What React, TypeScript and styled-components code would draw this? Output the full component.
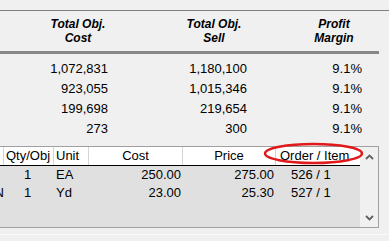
import React from "react";
import styled, { createGlobalStyle } from "styled-components";

const GlobalStyle = createGlobalStyle`
    html, body {
        margin: 0;
        padding: 0;
        background: #f0f0f0;
    }
`;

const Page = styled.div`
    position: relative;
    width: 389px;
    height: 241px;
    overflow: hidden;
    background: #f0f0f0;
    padding-top: 10px;
    box-sizing: border-box;
    font-family: "Liberation Sans", Arial, sans-serif;
    color: #000;
`;

const TopRule = styled.div`
    height: 1px;
    background: #7f7f7f;
`;

const SUMMARY_COLS = "48px 60px 73px 66px 59px 56px";

const SummaryHead = styled.div`
    display: grid;
    grid-template-columns: ${SUMMARY_COLS};
    height: 40px;
    align-items: center;
`;

const HeadLabel = styled.div<{ $col: number }>`
    grid-column: ${({ $col }) => $col};
    font-size: 12px;
    font-weight: bold;
    font-style: italic;
    line-height: 14.5px;
    text-align: center;
    white-space: nowrap;
`;

const ThickBar = styled.div`
    width: 379px;
    height: 3px;
    background: #878787;
`;

const SummaryBody = styled.div`
    margin-top: 5px;
`;

const SummaryRow = styled.div`
    display: grid;
    grid-template-columns: ${SUMMARY_COLS};
    height: 20px;
    align-items: center;
    font-size: 13px;
    line-height: 20px;
`;

const Value = styled.div<{ $col: number }>`
    grid-column: ${({ $col }) => $col};
    text-align: right;
    white-space: nowrap;
`;

const ListFrame = styled.div`
    margin-top: 7px;
    width: 379px;
    display: flex;
    border-top: 1px solid #a0a0a0;
    border-right: 1px solid #a0a0a0;
    border-bottom: 1px solid #a0a0a0;
    box-sizing: border-box;
`;

const ListArea = styled.div`
    width: 360px;
    display: flex;
    flex-direction: column;
`;

const HeaderRow = styled.div`
    display: flex;
    height: 18px;
    background: #fff;
    border-bottom: 1px solid #000;
    font-size: 13px;
    line-height: 18px;
`;

const Body = styled.div`
    height: 61px;
    background: #e0e0e0;
    font-size: 13px;
    line-height: 18px;
`;

const BodyRow = styled.div`
    display: flex;
    height: 18px;
`;

type Align = "left" | "center" | "right";

const Cell = styled.div<{ $w: number; $align?: Align; $pl?: number; $pr?: number; $sep?: boolean }>`
    flex: 0 0 ${({ $w }) => $w}px;
    box-sizing: border-box;
    display: flex;
    justify-content: ${({ $align }) =>
        $align === "right" ? "flex-end" : $align === "center" ? "center" : "flex-start"};
    padding-left: ${({ $pl }) => $pl ?? 0}px;
    padding-right: ${({ $pr }) => $pr ?? 0}px;
    border-right: ${({ $sep }) => ($sep ? "1px solid #d5d5d5" : "none")};
    overflow: hidden;
    white-space: nowrap;
`;

const Scrollbar = styled.div`
    width: 18px;
    background: #f0f0f0;
    display: flex;
    flex-direction: column;
    justify-content: space-between;
    align-items: center;
    padding: 7px 0 6px;
    box-sizing: border-box;
`;

const Below = styled.div`
    margin-top: 6px;
    height: 1px;
    background: #fafafa;
`;

const Annotation = styled.svg`
    position: absolute;
    left: 263px;
    top: 142px;
    pointer-events: none;
`;

const Chevron: React.FC<{ up?: boolean }> = ({ up }) => (
    <svg width="9" height="6" viewBox="0 0 9 6">
        <path
            d={up ? "M1 5 L4.5 1.5 L8 5" : "M1 1 L4.5 4.5 L8 1"}
            fill="none"
            stroke="#606060"
            strokeWidth="1.8"
        />
    </svg>
);

const summary = [
    ["1,072,831", "1,180,100", "9.1%"],
    ["923,055", "1,015,346", "9.1%"],
    ["199,698", "219,654", "9.1%"],
    ["273", "300", "9.1%"],
];

const items = [
    { lead: "", qty: "1", unit: "EA", cost: "250.00", price: "275.00", order: "526 / 1" },
    { lead: "N", qty: "1", unit: "Yd", cost: "23.00", price: "25.30", order: "527 / 1" },
];

export default function App() {
    return (
        <Page>
            <GlobalStyle />
            <TopRule />
            <SummaryHead>
                <HeadLabel $col={2}>
                    Total Obj.
                    <br />
                    Cost
                </HeadLabel>
                <HeadLabel $col={4}>
                    Total Obj.
                    <br />
                    Sell
                </HeadLabel>
                <HeadLabel $col={6}>
                    Profit
                    <br />
                    Margin
                </HeadLabel>
            </SummaryHead>
            <ThickBar />
            <SummaryBody>
                {summary.map((row, i) => (
                    <SummaryRow key={i}>
                        <Value $col={2}>{row[0]}</Value>
                        <Value $col={4}>{row[1]}</Value>
                        <Value $col={6}>{row[2]}</Value>
                    </SummaryRow>
                ))}
            </SummaryBody>
            <ListFrame>
                <ListArea>
                    <HeaderRow>
                        <Cell $w={4} $sep />
                        <Cell $w={50} $pl={2} $sep>
                            Qty/Obj
                        </Cell>
                        <Cell $w={35} $pl={2} $sep>
                            Unit
                        </Cell>
                        <Cell $w={94} $align="center" $sep>
                            Cost
                        </Cell>
                        <Cell $w={93} $align="center" $sep>
                            Price
                        </Cell>
                        <Cell $w={84} $pl={4}>
                            Order / Item
                        </Cell>
                    </HeaderRow>
                    <Body>
                        {items.map((it, i) => (
                            <BodyRow key={i}>
                                <Cell $w={4} $align="right" $pr={0}>
                                    {it.lead}
                                </Cell>
                                <Cell $w={50} $align="center" $pr={3}>
                                    {it.qty}
                                </Cell>
                                <Cell $w={35} $pl={2}>
                                    {it.unit}
                                </Cell>
                                <Cell $w={94} $align="right" $pr={2}>
                                    {it.cost}
                                </Cell>
                                <Cell $w={93} $align="right" $pr={2}>
                                    {it.price}
                                </Cell>
                                <Cell $w={84} $pl={15}>
                                    {it.order}
                                </Cell>
                            </BodyRow>
                        ))}
                    </Body>
                </ListArea>
                <Scrollbar>
                    <Chevron up />
                    <Chevron />
                </Scrollbar>
            </ListFrame>
            <Below />
            <Annotation width="101" height="23" viewBox="0 0 101 23">
                <ellipse cx="50.5" cy="11.5" rx="48.5" ry="9.5" fill="none" stroke="#e0191b" strokeWidth="2.4" />
            </Annotation>
        </Page>
    );
}
